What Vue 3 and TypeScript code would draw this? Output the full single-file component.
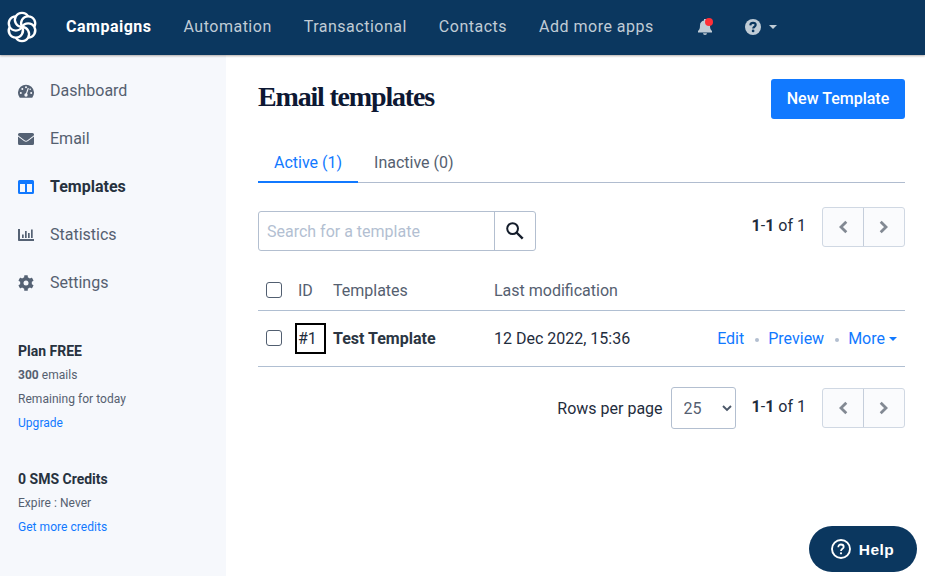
<script setup lang="ts">
import { ref } from 'vue'

interface NavItem { label: string; active?: boolean }
interface SideItem { label: string; icon: 'gauge' | 'mail' | 'columns' | 'chart' | 'gear'; active?: boolean }
interface Template { id: number; name: string; modified: string }

const nav: NavItem[] = [
  { label: 'Campaigns', active: true },
  { label: 'Automation' },
  { label: 'Transactional' },
  { label: 'Contacts' },
  { label: 'Add more apps' },
]
const side: SideItem[] = [
  { label: 'Dashboard', icon: 'gauge' },
  { label: 'Email', icon: 'mail' },
  { label: 'Templates', icon: 'columns', active: true },
  { label: 'Statistics', icon: 'chart' },
  { label: 'Settings', icon: 'gear' },
]
const templates: Template[] = [{ id: 1, name: 'Test Template', modified: '12 Dec 2022, 15:36' }]
const petals = [0, 60, 120, 180, 240, 300]
const teeth = [0, 60, 120]
const search = ref('')
const rows = ref('25')
</script>

<template>
  <div class="page">
    <header class="topbar">
      <svg class="logo" viewBox="-16 -16 32 32" width="32" height="32">
        <path
          v-for="a in petals" :key="a" :transform="`rotate(${a})`"
          d="M0 0A7.1 7.1 0 1 1 12.3 0" fill="none" stroke="#fff" stroke-width="2.3"
        />
      </svg>
      <nav class="nav">
        <a v-for="n in nav" :key="n.label" :class="{ on: n.active }">{{ n.label }}</a>
      </nav>
      <div class="bell">
        <svg viewBox="0 0 14 16" width="14" height="16">
          <path fill="currentColor" d="M6 0h2v1.6c2.5.5 4 2.3 4 4.9 0 3 .6 4.200 2 5.500v1.500H0V12c1.400-1.300 2-2.500 2-5.500C2 3.900 3.500 2.100 6 1.600zM5 14.200h4a2 1.800 0 0 1-4 0z" />
        </svg>
        <span class="dot"></span>
      </div>
      <div class="help-menu">
        <svg viewBox="0 0 16 16" width="16" height="16">
          <circle cx="8" cy="8" r="8" fill="currentColor" />
          <path d="M5.300 6.300C5.500 4.600 6.700 3.900 8 3.900c1.600 0 2.700.9 2.700 2.200 0 1.700-2.500 1.600-2.500 3.300" fill="none" stroke="#0b375f" stroke-width="2.100" />
          <circle cx="8.100" cy="11.900" r="1.350" fill="#0b375f" />
        </svg>
        <span class="caret"></span>
      </div>
    </header>

    <div class="body">
      <aside class="sidebar">
        <a v-for="s in side" :key="s.label" class="side-item" :class="{ on: s.active }">
          <svg viewBox="0 0 16 16" width="16" height="16">
            <template v-if="s.icon === 'gauge'">
              <path fill="currentColor" d="M1.600 14.500A8 8 0 1 1 14.400 14.500Q14.200 14.800 13.800 14.800H2.200Q1.800 14.800 1.600 14.500z" />
              <g fill="#f6f8fc">
                <circle cx="2.800" cy="10" r="1" /><circle cx="4.300" cy="6" r="1" />
                <circle cx="8" cy="4.200" r="1" /><circle cx="13.200" cy="10" r="1" />
                <circle cx="12.200" cy="6.300" r=".8" /><circle cx="8" cy="12" r="1.700" />
              </g>
              <path d="M8 12L10.300 5" stroke="#f6f8fc" stroke-width="1.100" />
            </template>
            <template v-else-if="s.icon === 'mail'">
              <path fill="currentColor" d="M1.500 2h13A1.500 1.500 0 0 1 16 3.500v.8L9.500 9.200Q8 10.200 6.500 9.200L0 4.300v-.8A1.500 1.500 0 0 1 1.500 2zM0 5.600l6 4.500q2 1.400 4 0l6-4.500v6.900a1.500 1.500 0 0 1-1.500 1.500h-13A1.500 1.500 0 0 1 0 12.500z" />
            </template>
            <path
              v-else-if="s.icon === 'columns'" fill="currentColor" fill-rule="evenodd"
              d="M1.500 1h13A1.500 1.500 0 0 1 16 2.500v11a1.500 1.500 0 0 1-1.500 1.500h-13A1.500 1.500 0 0 1 0 13.500v-11A1.500 1.500 0 0 1 1.500 1zM2 5v8h5V5zM9 5v8h5V5z"
            />
            <path
              v-else-if="s.icon === 'chart'" fill="currentColor"
              d="M0 2h2v10h14v2H.8Q0 14 0 13.200zM4 7.500h1.700V11H4zM7 4h1.700v7H7zM10 6h1.700v5H10zM13 2.500h1.700V11H13z"
            />
            <template v-else>
              <circle cx="8" cy="8" r="4.200" fill="none" stroke="currentColor" stroke-width="3.400" />
              <rect
                v-for="t in teeth" :key="t" :transform="`rotate(${t} 8 8)`"
                x="6.200" y=".2" width="3.600" height="15.600" rx=".6" fill="currentColor"
              />
              <circle cx="8" cy="8" r="2.500" fill="#f6f8fc" />
            </template>
          </svg>
          <span>{{ s.label }}</span>
        </a>
        <section class="plan">
          <h4>Plan FREE</h4>
          <p><b>300</b> emails</p>
          <p>Remaining for today</p>
          <a>Upgrade</a>
        </section>
        <section class="plan sms">
          <h4>0 SMS Credits</h4>
          <p>Expire : Never</p>
          <a>Get more credits</a>
        </section>
      </aside>

      <main class="main">
        <div class="title-row">
          <h1>Email templates</h1>
          <button class="primary">New Template</button>
        </div>
        <div class="tabs">
          <a class="tab on">Active (1)</a>
          <a class="tab">Inactive (0)</a>
        </div>
        <div class="tools">
          <div class="search">
            <input v-model="search" type="text" placeholder="Search for a template" />
            <button>
              <svg viewBox="0 0 18 18" width="18" height="18" fill="none" stroke="#141d2b">
                <circle cx="6.600" cy="6.600" r="5.400" stroke-width="2" />
                <path d="M10.500 10.500L16.700 16.700" stroke-width="2.400" />
              </svg>
            </button>
          </div>
          <div class="pager">
            <span class="range"><b>1</b>-<b>1</b> of 1</span>
            <div class="arrows">
              <button><svg viewBox="0 0 12 14" width="12" height="14"><path d="M9.300 1.800L4 7l5.300 5.200" /></svg></button>
              <button><svg viewBox="0 0 12 14" width="12" height="14"><path d="M2.700 1.800L8 7l-5.300 5.200" /></svg></button>
            </div>
          </div>
        </div>

        <div class="table">
          <div class="row head">
            <input type="checkbox" />
            <span>ID</span><span>Templates</span><span>Last modification</span>
          </div>
          <div v-for="t in templates" :key="t.id" class="row item">
            <input type="checkbox" />
            <span class="id">#{{ t.id }}</span>
            <b>{{ t.name }}</b>
            <span>{{ t.modified }}</span>
            <div class="actions">
              <a>Edit</a><i></i><a>Preview</a><i></i><a class="more">More<span class="caret"></span></a>
            </div>
          </div>
        </div>

        <div class="footer">
          <span class="rpp">Rows per page</span>
          <div class="select">
            <select v-model="rows"><option>25</option><option>50</option><option>100</option></select>
            <svg viewBox="0 0 10 7" width="10" height="7"><path d="M1 1l4 4 4-4" fill="none" stroke="#4b5768" stroke-width="1.900" /></svg>
          </div>
          <div class="pager">
            <span class="range"><b>1</b>-<b>1</b> of 1</span>
            <div class="arrows">
              <button><svg viewBox="0 0 12 14" width="12" height="14"><path d="M9.300 1.800L4 7l5.300 5.200" /></svg></button>
              <button><svg viewBox="0 0 12 14" width="12" height="14"><path d="M2.700 1.800L8 7l-5.300 5.200" /></svg></button>
            </div>
          </div>
        </div>
      </main>
    </div>

    <button class="help">
      <svg viewBox="0 0 20 20" width="20" height="20" fill="none" stroke="#fff">
        <circle cx="10" cy="10" r="9" stroke-width="1.900" />
        <path d="M7.300 8.200C7.300 6.400 8.500 5.500 10 5.500s2.700.9 2.700 2.400c0 1.900-2.700 2-2.700 4.200" stroke-width="1.800" />
        <circle cx="10" cy="14.300" r="1.100" fill="#fff" stroke="none" />
      </svg>
      <span>Help</span>
    </button>
  </div>
</template>

<style>
body { margin: 0; overflow: hidden; }
</style>

<style scoped>
*, *::before { box-sizing: border-box; }
.page { position: relative; height: 576px; display: flex; flex-direction: column; overflow: hidden; background: #fff; color: #1f2d3d; font: 16px/24px Roboto, sans-serif; }
button, input, select { font: inherit; }
button { margin: 0; padding: 0; display: flex; align-items: center; justify-content: center; border: 0; }
svg { display: block; flex: none; }
.topbar { position: relative; height: 55px; flex: none; display: flex; align-items: center; padding: 0 0 1px 6px; background: #0b375f; color: #c0ccd6; box-shadow: 0 1px 2px rgba(60, 40, 30, .38); z-index: 1; }
.nav { display: flex; gap: 32px; margin-left: 28px; letter-spacing: .5px; }
.nav .on { color: #fff; font-weight: 700; }
.bell { position: relative; margin-left: 44px; }
.dot { position: absolute; top: -1px; right: -1px; width: 8px; height: 8px; border-radius: 50%; background: #ff2f37; }
.help-menu { display: flex; align-items: center; gap: 8px; margin-left: 33px; }
.caret { width: 0; border: 4px solid transparent; border-top-color: currentColor; border-bottom: 0; }
.body { flex: 1; display: flex; }
.sidebar { width: 226px; flex: none; padding: 12px 18px 0; background: #f6f8fc; color: #556070; }
.side-item { height: 48px; display: flex; align-items: center; gap: 16px; }
.side-item svg { color: #556274; }
.side-item.on { color: #27323f; font-weight: 700; }
.side-item.on svg { color: #1179ff; }
.plan { margin-top: 32px; font-size: 12px; line-height: 24px; letter-spacing: .04px; }
.plan.sms { margin-top: 32px; }
.plan h4 { margin: 0; font-size: 14px; font-weight: 700; letter-spacing: 0; color: #27323f; }
.plan p { margin: 0; }
.plan a { display: block; color: #1179ff; }
.main { flex: 1; padding: 24px 20px 0 32px; }
.title-row { display: flex; justify-content: space-between; height: 64px; }
h1 { margin: 0; font: bold 28px/36px "Liberation Serif", serif; letter-spacing: -1.18px; color: #0d1833; }
.primary { width: 134px; height: 40px; border-radius: 3px; background: #1179ff; color: #fff; font-weight: 500; }
.tabs { display: flex; height: 40px; border-bottom: 1px solid #b0bccf; color: #556070; }
.tab { height: 40px; padding: 8px 16px; }
.tab.on { color: #1179ff; border-bottom: 2px solid #1179ff; }
.tools { display: flex; justify-content: space-between; margin-top: 24px; }
.search { display: flex; width: 278px; height: 40px; margin-top: 4px; border: 1px solid #b3bfd0; border-radius: 3px; }
.search input { width: 235px; padding: 2px 8px 0; border: 0; outline: 0; background: none; color: #1f2d3d; }
.search input::placeholder { color: #b3bfd2; opacity: 1; }
.search button { flex: 1; background: none; border-left: 1px solid #b3bfd0; }
.pager { display: flex; }
.range { margin: 7px 16px 0 0; }
.arrows { display: flex; width: 83px; height: 40px; border: 1px solid #d0d8e3; border-radius: 3px; background: #fafbfd; }
.arrows button { flex: 1; background: none; }
.arrows button + button { border-left: 1px solid #c5cedb; }
.arrows path { fill: none; stroke: #828993; stroke-width: 2.8; }
.table { margin-top: 19px; }
.row { display: grid; grid-template-columns: 32px 35px 161px 170px 1fr; align-items: center; padding: 0 8px; border-bottom: 1px solid #b0bfd2; }
.row input { appearance: none; width: 16px; height: 16px; margin: 0; border: 1px solid #515e70; border-radius: 3px; background: #fff; }
.head { height: 41px; color: #556070; }
.head span { padding-top: 1px; }
.item { height: 56px; }
.item input { margin-bottom: 1px; }
.item b { color: #2b3643; }
.id { position: relative; }
.id::before { content: ''; position: absolute; left: -3px; top: -4px; width: 31px; height: 31px; border: 2px solid #000; }
.actions { display: flex; align-items: center; justify-content: flex-end; color: #1179ff; }
.actions i { width: 4px; height: 4px; margin: 2px 9px 0 11px; border-radius: 50%; background: #b3bfd0; }
.more { display: flex; align-items: center; gap: 4px; }
.footer { display: flex; justify-content: flex-end; margin-top: 20px; }
.rpp { margin: 10px 8px 0 0; }
.select { position: relative; margin-right: 16px; }
.select select { display: block; width: 65px; height: 42px; padding: 1px 12px 0; appearance: none; border: 1px solid #b3bfd0; border-radius: 3px; background: #fff; color: #556070; }
.select svg { position: absolute; right: 4px; top: 18px; }
.footer .pager { margin-top: 1px; }
.help { position: absolute; right: 8px; bottom: 4px; width: 108px; height: 46px; gap: 8px; padding-right: 1px; border-radius: 23px; background: #0b375f; color: #fff; font: bold 15.5px/20px "Liberation Sans", sans-serif; letter-spacing: .5px; }
.help span { padding-top: 1px; }
</style>
